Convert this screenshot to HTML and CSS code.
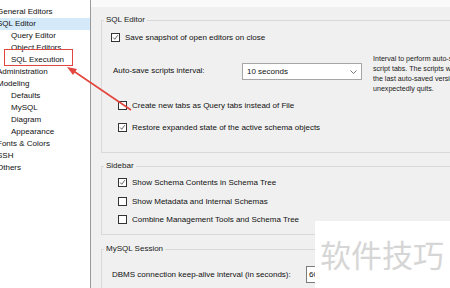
FILE: index.html
```html
<!DOCTYPE html>
<html lang="en">
<head>
    <meta charset="UTF-8">
    <meta name="viewport" content="width=device-width, initial-scale=1.0">
    <title>Preferences - SQL Editor</title>
    <link rel="stylesheet" href="styles.css">
</head>
<body>
    <div class="window">
        <ul class="tree">
            <li class="top">General Editors</li>
            <li class="top selected">SQL Editor</li>
            <li class="child">Query Editor</li>
            <li class="child">Object Editors</li>
            <li class="child">SQL Execution</li>
            <li class="top">Administration</li>
            <li class="top">Modeling</li>
            <li class="child">Defaults</li>
            <li class="child">MySQL</li>
            <li class="child">Diagram</li>
            <li class="child">Appearance</li>
            <li class="top">Fonts &amp; Colors</li>
            <li class="top">SSH</li>
            <li class="top">Others</li>
        </ul>

        <div class="content">
            <div class="top-strip"></div>

            <fieldset class="group group-editor">
                <legend>SQL Editor</legend>
                <div class="check-row row-save">
                    <span class="box checked"><svg viewBox="0 0 9 9"><polyline points="1.5,4.5 3.5,6.8 7.5,1.5"/></svg></span>
                    <span>Save snapshot of open editors on close</span>
                </div>
                <div class="interval-row">
                    <span class="interval-label">Auto-save scripts interval:</span>
                    <div class="select">
                        <span>10 seconds</span>
                        <svg class="chevron" viewBox="0 0 7 4"><polyline points="0.5,0.5 3.5,3.5 6.5,0.5"/></svg>
                    </div>
                    <p class="help">
                        Interval to perform auto-saving of all open<br>
                        script tabs. The scripts will be restored from<br>
                        the last auto-saved version if Workbench<br>
                        unexpectedly quits.
                    </p>
                </div>
                <div class="check-row row-create">
                    <span class="box"></span>
                    <span>Create new tabs as Query tabs instead of File</span>
                </div>
                <div class="check-row row-restore">
                    <span class="box checked"><svg viewBox="0 0 9 9"><polyline points="1.5,4.5 3.5,6.8 7.5,1.5"/></svg></span>
                    <span>Restore expanded state of the active schema objects</span>
                </div>
            </fieldset>

            <fieldset class="group group-sidebar">
                <legend>Sidebar</legend>
                <div class="check-row row-s1">
                    <span class="box checked"><svg viewBox="0 0 9 9"><polyline points="1.5,4.5 3.5,6.8 7.5,1.5"/></svg></span>
                    <span>Show Schema Contents in Schema Tree</span>
                </div>
                <div class="check-row row-s2">
                    <span class="box"></span>
                    <span>Show Metadata and Internal Schemas</span>
                </div>
                <div class="check-row row-s3">
                    <span class="box"></span>
                    <span>Combine Management Tools and Schema Tree</span>
                </div>
            </fieldset>

            <fieldset class="group group-session">
                <legend>MySQL Session</legend>
                <div class="session-row">
                    <span class="session-label">DBMS connection keep-alive interval (in seconds):</span>
                    <div class="num-input">600</div>
                </div>
            </fieldset>
        </div>
    </div>

    <!-- annotation drawn over the screenshot -->
    <div class="callout-box"></div>
    <svg class="callout-arrow" width="450" height="288" viewBox="0 0 450 288">
        <line x1="131" y1="110" x2="72" y2="70"/>
        <polygon points="67,67 77,69 73,75"/>
    </svg>

    <div class="watermark">软件技巧</div>
</body>
</html>
```

FILE: styles.css
```css
body {
    margin: 0;
    width: 450px;
    height: 288px;
    overflow: hidden;
    font-family: 'Liberation Sans', Arial, sans-serif;
    font-size: 8px;
    color: #111;
    background: #f0f0f0;
    position: relative;
}

.window {
    display: flex;
    height: 288px;
}

/* left navigation tree */
.tree {
    list-style: none;
    margin: 0;
    padding: 6px 0 0 0;
    width: 90px;
    flex-shrink: 0;
    background: #fff;
    border-right: 1px solid #9a9a9a;
    overflow: hidden;
}

.tree li {
    height: 12px;
    line-height: 12px;
    white-space: nowrap;
}

.tree .top {
    padding-left: 0;
    text-indent: -3px;
}

.tree .child {
    padding-left: 11px;
}

.tree .selected {
    background: #d4e9fa;
}

/* right settings page */
.content {
    flex: 1;
    overflow: hidden;
}

.top-strip {
    height: 7px;
    background: #fafafa;
}

.group {
    margin: 0 0 0 10px;
    padding: 0;
    width: 420px;
    min-width: 0;
    border: 1px solid #d9d9d9;
}

.group legend {
    margin-left: 2px;
    padding: 0 2px;
    line-height: 10px;
    color: #1a1a1a;
}

.group-editor {
    margin-top: 8px;
    padding-bottom: 19px;
}

.group-sidebar {
    margin-top: 8px;
    padding-bottom: 9px;
}

.group-session {
    margin-top: 9px;
    padding-bottom: 20px;
}

.check-row {
    display: flex;
    align-items: center;
    height: 12px;
    gap: 5px;
    white-space: nowrap;
}

.box {
    width: 9px;
    height: 9px;
    border: 1px solid #333;
    background: #fff;
    box-sizing: border-box;
    display: flex;
}

.box svg {
    width: 100%;
    height: 100%;
    fill: none;
    stroke: #222;
    stroke-width: 0.9;
}

.row-save { margin: 6px 0 0 9px; }
.row-create { margin: 5px 0 0 16px; }
.row-restore { margin: 10px 0 0 16px; }
.row-s1 { margin: 5px 0 0 16px; }
.row-s2 { margin: 7px 0 0 16px; }
.row-s3 { margin: 6px 0 0 16px; }

.interval-row {
    display: flex;
    align-items: flex-start;
    margin: 11px 0 0 11px;
    height: 40px;
}

.interval-label {
    width: 129px;
    margin-top: 12px;
    white-space: nowrap;
}

.select {
    width: 120px;
    height: 17px;
    margin-top: 9px;
    box-sizing: border-box;
    border: 1px solid #a6a6a6;
    background: #fff;
    display: flex;
    align-items: center;
    justify-content: space-between;
    padding: 0 4px 0 4px;
}

.chevron {
    width: 7px;
    height: 4px;
    fill: none;
    stroke: #666;
    stroke-width: 0.9;
}

.help {
    margin: 0 0 0 11px;
    font-size: 7.1px;
    line-height: 10px;
    white-space: nowrap;
    color: #1a1a1a;
}

.session-row {
    display: flex;
    align-items: center;
    margin: 12px 0 0 10px;
    height: 17px;
}

.session-label {
    width: 194px;
    white-space: nowrap;
}

.num-input {
    width: 60px;
    height: 17px;
    box-sizing: border-box;
    border: 1px solid #7a7a7a;
    background: #fff;
    line-height: 15px;
    padding-left: 2px;
}

/* red annotation marks */
.callout-box {
    position: absolute;
    left: 4px;
    top: 49px;
    width: 69px;
    height: 17px;
    border: 1px solid #e2463e;
    box-sizing: border-box;
}

.callout-arrow {
    position: absolute;
    left: 0;
    top: 0;
}

.callout-arrow line {
    stroke: #e2463e;
    stroke-width: 1.6;
}

.callout-arrow polygon {
    fill: #e2463e;
}

/* site watermark */
.watermark {
    position: absolute;
    left: 315px;
    top: 221px;
    width: 135px;
    height: 67px;
    background: #fff;
    box-sizing: border-box;
    padding: 17px 0 0 5px;
    font-family: 'Noto Sans CJK SC', sans-serif;
    font-size: 31px;
    line-height: 31px;
    color: #d6d6d6;
    white-space: nowrap;
}
```
